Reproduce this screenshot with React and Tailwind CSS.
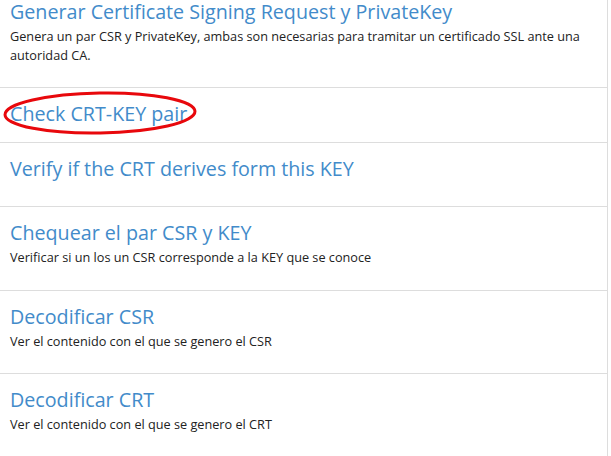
const items = [
    {
        title: "Generar Certificate Signing Request y PrivateKey",
        desc: "Genera un par CSR y PrivateKey, ambas son necesarias para tramitar un certificado SSL ante una autoridad CA.",
        pad: "pt-px pb-[22px]"
    },
    { title: "Check CRT-KEY pair", pad: "pt-[15px] pb-[17px]", circled: true },
    { title: "Verify if the CRT derives form this KEY", pad: "pt-[15px] pb-[26px]" },
    {
        title: "Chequear el par CSR y KEY",
        desc: "Verificar si un los un CSR corresponde a la KEY que se conoce",
        pad: "pt-[15px] pb-[23px]"
    },
    {
        title: "Decodificar CSR",
        desc: "Ver el contenido con el que se genero el CSR",
        pad: "pt-[15px] pb-[22px]"
    },
    {
        title: "Decodificar CRT",
        desc: "Ver el contenido con el que se genero el CRT",
        pad: "pt-[15px] pb-6"
    }
];

// elipse roja dibujada a mano sobre el titulo
const RedCircle = () => (
    <svg
        className="absolute left-[-9px] top-[-13px] pointer-events-none"
        width="198"
        height="46"
        viewBox="0 0 198 46"
    >
        <ellipse
            cx="99"
            cy="23"
            rx="95"
            ry="20"
            fill="none"
            stroke="#e8080c"
            strokeWidth="3"
            transform="rotate(-1 99 23)"
        />
    </svg>
);

export default function App() {
    return (
        <div className="w-[608px] h-[456px] overflow-hidden bg-white border-r border-[#dddddd] font-['Open_Sans',sans-serif]">
            {items.map((item, i) => (
                <div
                    key={i}
                    className={`px-[10px] ${i > 0 ? "border-t border-[#dddddd]" : ""} ${item.pad}`}
                >
                    <div className="relative w-fit">
                        <h3 className="text-[19.7px] leading-[22px] text-[#428bca]">
                            {item.title}
                        </h3>
                        {item.circled && <RedCircle />}
                    </div>
                    {item.desc && (
                        <p className="mt-[4px] max-w-[585px] text-[12.7px] leading-[19px] text-[#222222]">
                            {item.desc}
                        </p>
                    )}
                </div>
            ))}
        </div>
    );
}
